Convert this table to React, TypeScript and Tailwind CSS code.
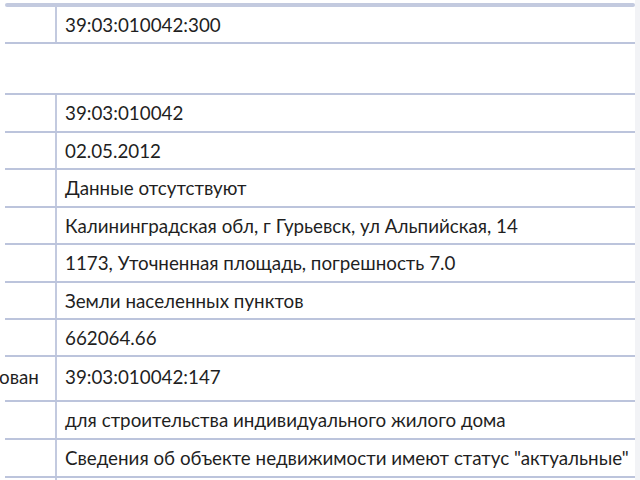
const rows: { left?: string; value?: string; h: string; tall?: boolean; noDivider?: boolean }[] = [
  { value: '39:03:010042:300', h: 'h-[37px]' },
  { h: 'h-[51px]', noDivider: true },
  { value: '39:03:010042', h: 'h-[38px]' },
  { value: '02.05.2012', h: 'h-[37px]' },
  { value: 'Данные отсутствуют', h: 'h-[38px]' },
  { value: 'Калининградская обл, г Гурьевск, ул Альпийская, 14', h: 'h-[37px]' },
  { value: '1173, Уточненная площадь, погрешность 7.0', h: 'h-[38px]' },
  { value: 'Земли населенных пунктов', h: 'h-[37px]' },
  { value: '662064.66', h: 'h-[37px]' },
  { left: 'ован', value: '39:03:010042:147', h: 'h-[45px]', tall: true },
  { value: 'для строительства индивидуального жилого дома', h: 'h-[38px]' },
  { value: 'Сведения об объекте недвижимости имеют статус "актуальные"', h: 'h-[38px]' },
  { h: 'h-[38px]' },
];

export default function App() {
  return (
    <div
      className="w-[640px] h-[480px] overflow-hidden bg-white flex"
      style={{ fontFamily: 'Lato, "Open Sans", sans-serif' }}
    >
      <div className="w-[635px] pl-[5px] pt-[3px]">
        {/* top edge of the table */}
        <div className="h-[4px] bg-[#c3cadf] rounded-sm" />
        {rows.map((row, i) => (
          <div
            key={i}
            className={`flex border-b-2 border-[#bcc4dc] text-[18.8px] leading-[22px] text-[#1f1f1f] ${row.h}`}
          >
            <div
              className={`w-[52px] h-full flex ${row.tall ? 'items-start pt-[9px]' : 'items-center'} ${
                row.noDivider ? '' : 'border-r-2 border-[#c3cadf]'
              }`}
            >
              {row.left && <span className="-ml-[6px]">{row.left}</span>}
            </div>
            <div
              className={`pl-[8px] h-full flex whitespace-nowrap ${
                row.tall ? 'items-start pt-[9px]' : 'items-center'
              }`}
            >
              {row.value}
            </div>
          </div>
        ))}
      </div>
      <div className="flex-1 bg-[#f2f3f6]" />
    </div>
  );
}
